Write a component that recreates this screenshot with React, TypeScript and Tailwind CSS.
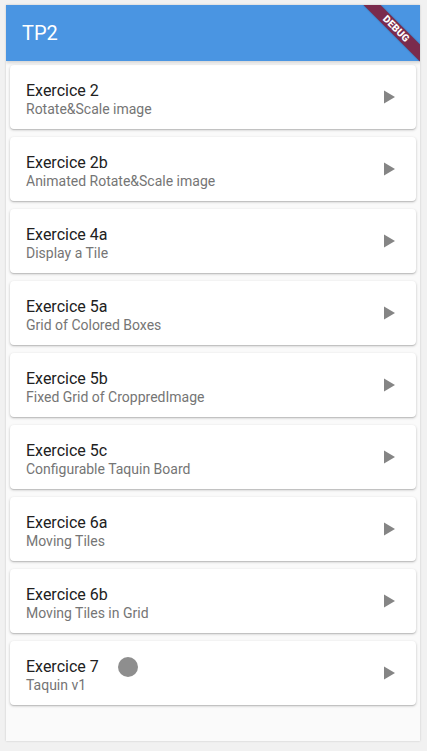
import React from "react";

const items: { title: string; subtitle: string; dot?: boolean }[] = [
  { title: "Exercice 2", subtitle: "Rotate&Scale image" },
  { title: "Exercice 2b", subtitle: "Animated Rotate&Scale image" },
  { title: "Exercice 4a", subtitle: "Display a Tile" },
  { title: "Exercice 5a", subtitle: "Grid of Colored Boxes" },
  { title: "Exercice 5b", subtitle: "Fixed Grid of CroppredImage" },
  { title: "Exercice 5c", subtitle: "Configurable Taquin Board" },
  { title: "Exercice 6a", subtitle: "Moving Tiles" },
  { title: "Exercice 6b", subtitle: "Moving Tiles in Grid" },
  { title: "Exercice 7", subtitle: "Taquin v1", dot: true },
];

function PlayArrow() {
  return (
    <svg width="24" height="24" viewBox="0 0 24 24" className="shrink-0">
      <path d="M8 5.5v13l11-6.5z" fill="#858585" />
    </svg>
  );
}

export default function App() {
  return (
    <div
      className="w-[427px] h-[751px] bg-[#f1f1f1] pt-[5px] pl-[6px] overflow-hidden"
      style={{ fontFamily: "Roboto, 'Noto Sans', sans-serif" }}
    >
      <div className="relative w-[414px] h-[736px] bg-[#fafafa] overflow-hidden shadow-[0_0_2px_rgba(0,0,0,0.18)] flex flex-col">
        <div className="h-[56px] bg-[#4a95e2] flex items-center pl-4 shrink-0 shadow-[0_2px_3px_rgba(0,0,0,0.15)] z-10">
          <span className="text-white text-[20px] leading-[24px] font-normal">TP2</span>
        </div>
        <div className="flex flex-col gap-2 pt-1 px-1">
          {items.map((it) => (
            <div
              key={it.title}
              className="h-[64px] bg-white rounded-[4px] shadow-[0_1px_3px_rgba(0,0,0,0.2),0_1px_1px_rgba(0,0,0,0.12)] flex items-start pl-4 pr-4"
            >
              <div className="flex-1 pt-[16px] flex flex-col">
                <div className="flex items-center h-[20px]">
                  <span className="text-[16px] leading-[20px] text-[#212121]">{it.title}</span>
                  {it.dot && <span className="ml-[19px] w-[20px] h-[20px] rounded-full bg-[#8e8e8e]" />}
                </div>
                <span className="text-[14px] leading-[16px] text-[#757575]">{it.subtitle}</span>
              </div>
              <div className="self-center">
                <PlayArrow />
              </div>
            </div>
          ))}
        </div>
        <div className="absolute left-[350px] top-[18px] w-[80px] h-[12px] rotate-45 bg-[#7a2b4d] flex items-center justify-center z-20 shadow-[0_0_2px_rgba(0,0,0,0.3)]">
          <span className="text-white text-[10px] leading-[12px] font-black tracking-[0.2px]">DEBUG</span>
        </div>
      </div>
    </div>
  );
}
